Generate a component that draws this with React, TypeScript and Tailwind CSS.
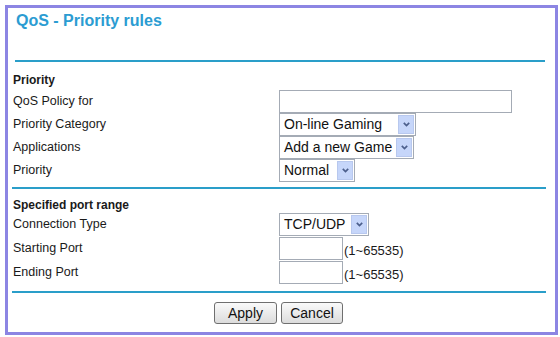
import React from "react";

const font = { fontFamily: '"Liberation Sans", Arial, sans-serif' };

function Chevron() {
  return (
    <svg width="9" height="7" viewBox="0 0 9 7">
      <path d="M1.8 1.8 L4.5 4.5 L7.2 1.8" fill="none" stroke="#4c5f8c" strokeWidth="1.7" />
    </svg>
  );
}

function Select({ value, width }: { value: string; width: string }) {
  return (
    <div className={`flex h-[23px] items-stretch border border-[#a4abb5] bg-white ${width}`}>
      <span className="flex flex-1 items-center pl-[4px] text-[14px] text-[#111] whitespace-nowrap overflow-hidden">
        {value}
      </span>
      <span className="m-[1px] flex w-[16px] items-center justify-center border border-[#b8c8ee] bg-[#c6d6fa]">
        <Chevron />
      </span>
    </div>
  );
}

function TextInput({ width }: { width: string }) {
  return <div className={`h-[23px] border border-[#a4abb5] bg-white ${width}`} />;
}

function Row({ label, h = "h-[23px]", children }: { label: string; h?: string; children: React.ReactNode }) {
  return (
    <div className={`flex items-center ${h}`}>
      <div className="w-[266px] text-[12.5px] leading-[23px] text-[#1a1a1a]">{label}</div>
      <div className="flex items-center">{children}</div>
    </div>
  );
}

function Rule({ ml, w, mt }: { ml: string; w: string; mt: string }) {
  return <div className={`h-[2px] bg-[#2a9ec9] ${ml} ${w} ${mt}`} />;
}

function Button({ label, width }: { label: string; width: string }) {
  return (
    <button
      className={`h-[22px] rounded-[3px] border border-[#6f6f6f] bg-gradient-to-b from-[#fafafa] to-[#dcdcdc] text-[14px] leading-[20px] text-[#111] ${width}`}
    >
      {label}
    </button>
  );
}

export default function App() {
  return (
    <div className="h-[337px] w-[560px] bg-white pl-[5px] pt-[5px]" style={font}>
      <div className="h-[330px] w-[553px] border-[3px] border-[#8c85e3] bg-white">
        {/* header */}
        <h1 className="ml-[8px] mt-[4px] text-[16px] font-bold leading-[18px] text-[#2b9cd2]">
          QoS - Priority rules
        </h1>
        <Rule ml="ml-[7px]" w="w-[530px]" mt="mt-[30px]" />

        {/* priority */}
        <div className="pl-[5px]">
          <div className="h-[28px] pt-[11px] text-[12px] font-bold leading-[14px] text-[#1a1a1a]">Priority</div>
          <Row label="QoS Policy for">
            <TextInput width="w-[233px]" />
          </Row>
          <Row label="Priority Category">
            <Select value="On-line Gaming" width="w-[137px]" />
          </Row>
          <Row label="Applications">
            <Select value="Add a new Game" width="w-[135px]" />
          </Row>
          <Row label="Priority">
            <Select value="Normal" width="w-[76px]" />
          </Row>
        </div>
        <Rule ml="ml-[4px]" w="w-[534px]" mt="mt-[5px]" />

        {/* port range */}
        <div className="pl-[5px]">
          <div className="h-[24px] pt-[9px] text-[12px] font-bold leading-[14px] text-[#1a1a1a]">
            Specified port range
          </div>
          <Row label="Connection Type">
            <Select value="TCP/UDP" width="w-[90px]" />
          </Row>
          <Row label="Starting Port" h="h-[24px]">
            <TextInput width="w-[64px]" />
            <span className="ml-[1px] mt-[6px] text-[13px] text-[#1a1a1a]">(1~65535)</span>
          </Row>
          <Row label="Ending Port" h="h-[24px]">
            <TextInput width="w-[64px]" />
            <span className="ml-[1px] mt-[6px] text-[13px] text-[#1a1a1a]">(1~65535)</span>
          </Row>
        </div>
        <Rule ml="ml-[4px]" w="w-[534px]" mt="mt-[7px]" />

        {/* actions */}
        <div className="mt-[9px] flex justify-center gap-[4px] pr-[6px]">
          <Button label="Apply" width="w-[63px]" />
          <Button label="Cancel" width="w-[62px]" />
        </div>
      </div>
    </div>
  );
}
